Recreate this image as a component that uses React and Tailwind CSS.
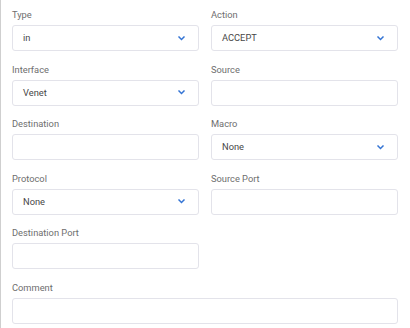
import React from "react";

function Chevron() {
  return (
    <svg width="7" height="5" viewBox="0 0 7 5" className="shrink-0">
      <path d="M1 1 L3.5 3.5 L6 1" fill="none" stroke="#3474d4" strokeWidth="1.5" strokeLinecap="square" />
    </svg>
  );
}

function Field({ label, value, select }) {
  return (
    <div className="flex flex-col">
      <div className="text-[9.3px] leading-[12px] text-[#6e6e6e] mb-[4px]">{label}</div>
      <div className="h-[26px] rounded-[3px] border border-[#e3e3ea] bg-white flex items-center pl-[10px] pr-[13px] justify-between">
        <span className="text-[9.3px] text-[#474747]">{value}</span>
        {select && <Chevron />}
      </div>
    </div>
  );
}

export default function App() {
  return (
    <div className="w-[410px] h-[328px] bg-white overflow-hidden" style={{ fontFamily: "Roboto, 'Liberation Sans', sans-serif" }}>
      <div className="h-full border-l border-[#cfcfcf] pl-[11px] pr-[12px] pt-[9px]">
        <div className="grid grid-cols-2 gap-x-[12px] gap-y-[12.6px]">
          <Field label="Type" value="in" select />
          <Field label="Action" value="ACCEPT" select />
          <Field label="Interface" value="Venet" select />
          <Field label="Source" value="" />
          <Field label="Destination" value="" />
          <Field label="Macro" value="None" select />
          <Field label="Protocol" value="None" select />
          <Field label="Source Port" value="" />
          <Field label="Destination Port" value="" />
          <div />
          <div className="col-span-2">
            <Field label="Comment" value="" />
          </div>
        </div>
      </div>
    </div>
  );
}
